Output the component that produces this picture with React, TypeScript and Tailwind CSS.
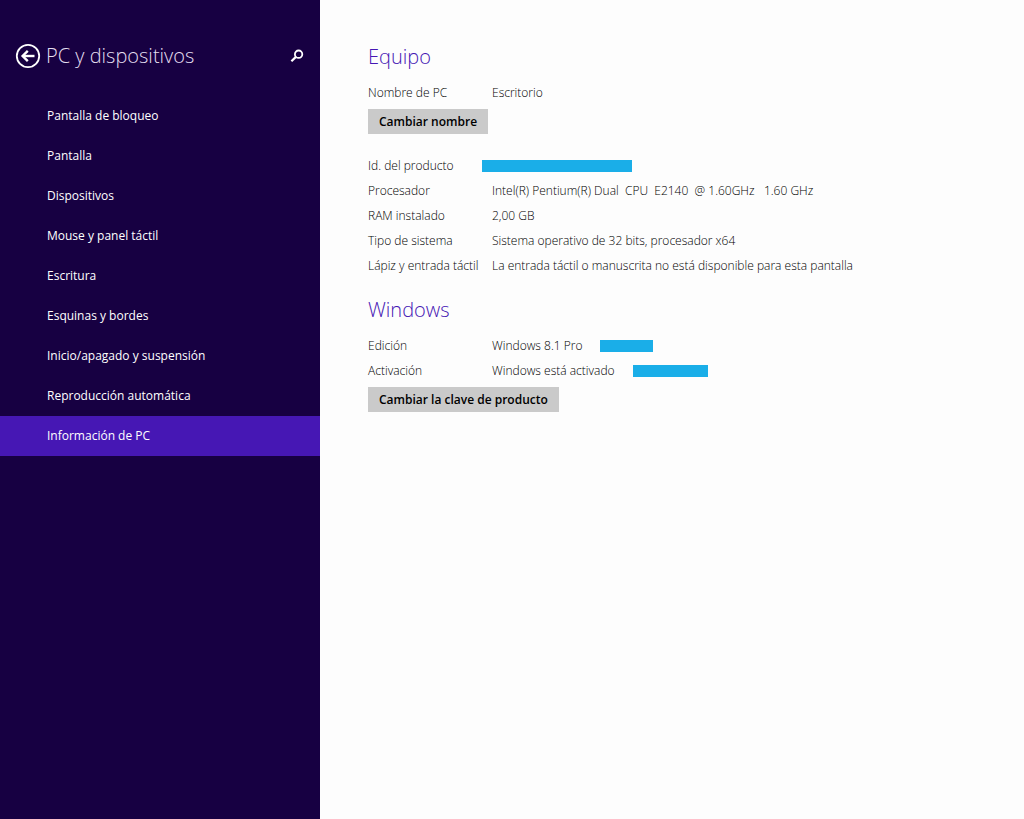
import React from 'react';

interface InfoRow {
  label: string;
  value?: string;
  // Width class of the bar that hides private data
  hidden?: string;
}

const navItems = [
  'Pantalla de bloqueo',
  'Pantalla',
  'Dispositivos',
  'Mouse y panel táctil',
  'Escritura',
  'Esquinas y bordes',
  'Inicio/apagado y suspensión',
  'Reproducción automática',
  'Información de PC',
];

const activeItem = 'Información de PC';

const nameRows: InfoRow[] = [{ label: 'Nombre de PC', value: 'Escritorio' }];

const hardwareRows: InfoRow[] = [
  { label: 'Id. del producto', hidden: 'w-[150px]' },
  { label: 'Procesador', value: 'Intel(R) Pentium(R) Dual  CPU  E2140  @ 1.60GHz   1.60 GHz' },
  { label: 'RAM instalado', value: '2,00 GB' },
  { label: 'Tipo de sistema', value: 'Sistema operativo de 32 bits, procesador x64' },
  { label: 'Lápiz y entrada táctil', value: 'La entrada táctil o manuscrita no está disponible para esta pantalla' },
];

const windowsRows: InfoRow[] = [
  { label: 'Edición', value: 'Windows 8.1 Pro', hidden: 'w-[53px]' },
  { label: 'Activación', value: 'Windows está activado', hidden: 'w-[75px]' },
];

const BackIcon: React.FC = () => (
  <svg width="26" height="26" viewBox="0 0 26 26" fill="none" stroke="currentColor" aria-hidden="true">
    <circle cx="13" cy="13" r="11.2" strokeWidth="1.8" />
    <path d="M19.5 13H8" strokeWidth="2.4" />
    <path d="M12.8 7.8L7.6 13l5.2 5.2" strokeWidth="2.4" />
  </svg>
);

const SearchIcon: React.FC = () => (
  <svg width="14" height="14" viewBox="0 0 14 14" fill="none" stroke="currentColor" aria-hidden="true">
    <circle cx="8.6" cy="5.2" r="3.7" strokeWidth="1.8" />
    <path d="M5.9 7.9L1.4 12.3" strokeWidth="2.2" />
  </svg>
);

const InfoList: React.FC<{ rows: InfoRow[] }> = ({ rows }) => (
  <dl>
    {rows.map((row) => (
      <div key={row.label} className="flex min-h-[25px] items-center">
        <dt className="w-[114px] shrink-0 whitespace-nowrap">{row.label}</dt>
        <dd className="flex items-center">
          {row.value && <span className="pr-[18px] pl-[10px] whitespace-pre-wrap">{row.value}</span>}
          {row.hidden && <span className={`h-3 shrink-0 bg-[#1aaee8] ${row.hidden}`} />}
        </dd>
      </div>
    ))}
  </dl>
);

const ActionButton: React.FC<{ children: React.ReactNode }> = ({ children }) => (
  <button type="button" className="mt-1 h-[25px] bg-[#cacaca] px-[11px] text-xs font-semibold text-black">
    {children}
  </button>
);

const Sidebar: React.FC = () => (
  <aside className="w-80 shrink-0 bg-[#170042] text-white">
    <header className="flex h-24 items-center pt-4 pr-4 pl-[15px]">
      <button type="button" aria-label="Atrás" className="shrink-0">
        <BackIcon />
      </button>
      <h1 className="ml-[5px] flex-1 text-xl font-light text-[#e4dff0]">PC y dispositivos</h1>
      <button type="button" aria-label="Buscar" className="shrink-0">
        <SearchIcon />
      </button>
    </header>
    <nav>
      {navItems.map((item) => (
        <a
          key={item}
          href="#"
          aria-current={item === activeItem ? 'page' : undefined}
          className={`flex h-10 items-center pl-[47px] text-xs ${item === activeItem ? 'bg-[#4617b4]' : ''}`}
        >
          {item}
        </a>
      ))}
    </nav>
  </aside>
);

export default function App() {
  return (
    <div className="flex min-h-screen bg-[#fdfdfd] font-['Open_Sans',sans-serif]">
      <Sidebar />
      <main className="flex-1 px-12 pt-[42px] text-xs font-light text-black">
        <section>
          <h2 className="mb-2 text-xl leading-[30px] text-[#4617b4]">Equipo</h2>
          <InfoList rows={nameRows} />
          <ActionButton>Cambiar nombre</ActionButton>
          <div className="mt-[19px]">
            <InfoList rows={hardwareRows} />
          </div>
        </section>
        <section className="mt-[17px]">
          <h2 className="mb-2 text-xl leading-[30px] text-[#4617b4]">Windows</h2>
          <InfoList rows={windowsRows} />
          <ActionButton>Cambiar la clave de producto</ActionButton>
        </section>
      </main>
    </div>
  );
}
